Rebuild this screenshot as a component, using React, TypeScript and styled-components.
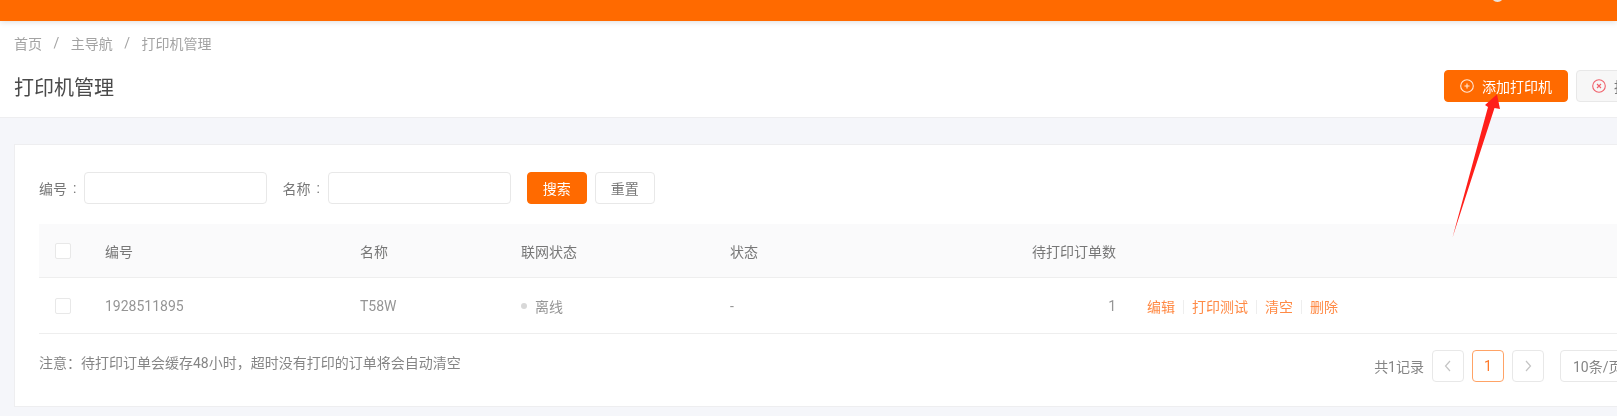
import React from "react";
import styled, { createGlobalStyle } from "styled-components";

const Global = createGlobalStyle`
  html, body { margin: 0; padding: 0; background: #f5f6fa; overflow: hidden; }
  body { font-family: "Roboto", "Noto Sans CJK SC", sans-serif; font-size: 14px; }
  * { box-sizing: border-box; }
`;

const Page = styled.div`
  position: relative;
  width: 1617px;
  height: 416px;
  overflow: hidden;
  background: #f5f6fa;
  filter: blur(0.6px);
`;

const TopBar = styled.div`
  height: 21px;
  background: #ff6a00;
  position: relative;
  z-index: 1;
  box-shadow: 0 1px 6px rgba(0, 0, 0, 0.14);
`;

const Avatar = styled.span`
  position: absolute;
  left: 1491px;
  top: -11px;
  width: 13px;
  height: 13px;
  border-radius: 50%;
  background: #e8e2dc;
`;

const Header = styled.header`
  height: 97px;
  background: #fff;
  border-bottom: 1px solid #eeeef0;
  padding: 12px 14px 0;
`;

const Crumbs = styled.nav`
  display: flex;
  height: 20px;
  align-items: center;
  font-size: 14px;
  color: #a3a3a3;
  gap: 11.5px;
`;

const TitleRow = styled.div`
  display: flex;
  align-items: center;
  margin-top: 17px;
  width: 1686px;
`;

const Title = styled.h1`
  margin: 0;
  font-size: 20px;
  font-weight: 400;
  color: #4a4a4a;
`;

const Actions = styled.div`
  display: flex;
  gap: 8px;
  margin-left: auto;
`;

const Btn = styled.button<{ $primary?: boolean }>`
  height: 32px;
  border-radius: 4px;
  padding: 0;
  font: inherit;
  font-size: 14px;
  display: inline-flex;
  align-items: center;
  justify-content: center;
  border: 1px solid ${(p) => (p.$primary ? "#ff6a00" : "#e8e8e8")};
  background: ${(p) => (p.$primary ? "#ff6a00" : "#fff")};
  color: ${(p) => (p.$primary ? "#fff" : "#777")};
`;

const IconBtn = styled(Btn)`
  width: 124px;
  justify-content: flex-start;
  padding-left: 15px;
  gap: 8px;
`;

const ClearBtn = styled(IconBtn)`
  background: #f7f7f7;
`;

const SearchBtn = styled(Btn)`
  width: 60px;
`;

const Content = styled.main`
  padding: 26px 0 0 14px;
`;

const Card = styled.section`
  width: 1700px;
  height: 263px;
  background: #fff;
  border: 1px solid #eeeef0;
  padding: 27px 24px 0 24px;
`;

const SearchRow = styled.div`
  display: flex;
  align-items: center;
  height: 32px;
`;

const Field = styled.label`
  display: flex;
  align-items: center;
  font-size: 14px;
  color: #777;
  margin-right: 15px;
`;

const Colon = styled.span`
  margin: 0 8px 0 6px;
`;

const Input = styled.div`
  width: 183px;
  height: 32px;
  border: 1px solid #e8e8e8;
  border-radius: 4px;
  background: #fff;
`;

const Buttons = styled.div`
  display: flex;
  gap: 8px;
  margin-left: 1px;
`;

const Table = styled.div`
  margin-top: 20px;
  width: 1621px;
`;

const Row = styled.div<{ $head?: boolean }>`
  display: grid;
  grid-template-columns: 66px 255px 161px 209px 200px 186px 1fr;
  align-items: center;
  height: ${(p) => (p.$head ? 54 : 56)}px;
  font-size: 14px;
  color: ${(p) => (p.$head ? "#777" : "#959595")};
  background: ${(p) => (p.$head ? "#fafafb" : "#fff")};
  border-bottom: 1px solid #eeeeee;
`;

const CheckCell = styled.div`
  padding-left: 16px;
  display: flex;
`;

const Check = styled.span`
  width: 16px;
  height: 16px;
  border: 1px solid #e8e8e8;
  border-radius: 2px;
  background: #fff;
`;

const Count = styled.div`
  text-align: right;
`;

const StatusCell = styled.div`
  display: flex;
  align-items: center;
  gap: 8px;
`;

const Dot = styled.span`
  width: 6px;
  height: 6px;
  border-radius: 50%;
  background: #d8d8d8;
`;

const Ops = styled.div`
  display: flex;
  align-items: center;
  padding-left: 31px;
  color: #ff8a45;
  font-size: 14px;
`;

const OpLink = styled.span`
  & + &::before {
    content: "";
    display: inline-block;
    width: 1px;
    height: 14px;
    background: #eeeeee;
    margin: 0 8px;
    vertical-align: -2px;
  }
`;

const Footer = styled.div`
  display: flex;
  align-items: flex-start;
  padding-top: 16px;
  width: 1621px;
`;

const Note = styled.div`
  font-size: 14px;
  line-height: 20px;
  margin-top: 3px;
  color: #858585;
`;

const Pager = styled.div`
  margin-left: auto;
  display: flex;
  align-items: center;
  gap: 8px;
  font-size: 14px;
  color: #858585;
`;

const PageBox = styled.span<{ $active?: boolean }>`
  width: 32px;
  height: 32px;
  border-radius: 4px;
  border: 1px solid ${(p) => (p.$active ? "#ffa366" : "#e8e8e8")};
  color: ${(p) => (p.$active ? "#ff7a2a" : "#c4c4c4")};
  display: inline-flex;
  align-items: center;
  justify-content: center;
`;

const PageSize = styled.span`
  width: 100px;
  height: 32px;
  margin-left: 8px;
  border-radius: 4px;
  border: 1px solid #e8e8e8;
  display: inline-flex;
  align-items: center;
  padding-left: 12px;
  white-space: nowrap;
`;

const Arrow = styled.svg`
  position: absolute;
  left: 1440px;
  top: 90px;
  z-index: 2;
`;

const PlusIcon = () => (
  <svg width="14" height="14" viewBox="0 0 14 14" fill="none" stroke="#ffe9da" strokeWidth="1.1">
    <circle cx="7" cy="7" r="6.3" />
    <path d="M7 4.5v5M4.5 7h5" />
  </svg>
);

const CloseIcon = () => (
  <svg width="14" height="14" viewBox="0 0 14 14" fill="none" stroke="#f0606a" strokeWidth="1.1">
    <circle cx="7" cy="7" r="6.3" />
    <path d="M5 5l4 4M9 5l-4 4" />
  </svg>
);

const Chevron = ({ d }: { d: string }) => (
  <svg width="8" height="12" viewBox="0 0 8 12" fill="none" stroke="#c4c4c4" strokeWidth="1.2">
    <path d={d} />
  </svg>
);

export default function App() {
  return (
    <Page>
      <Global />
      <TopBar>
        <Avatar />
      </TopBar>
      <Header>
        <Crumbs>
          <span>首页</span>
          <span>/</span>
          <span>主导航</span>
          <span>/</span>
          <span>打印机管理</span>
        </Crumbs>
        <TitleRow>
          <Title>打印机管理</Title>
          <Actions>
            <IconBtn $primary>
              <PlusIcon />
              添加打印机
            </IconBtn>
            <ClearBtn>
              <CloseIcon />
              批量删除
            </ClearBtn>
          </Actions>
        </TitleRow>
      </Header>
      <Content>
        <Card>
          <SearchRow>
            <Field>
              编号<Colon>:</Colon>
              <Input />
            </Field>
            <Field>
              名称<Colon>:</Colon>
              <Input />
            </Field>
            <Buttons>
              <SearchBtn $primary>搜索</SearchBtn>
              <SearchBtn>重置</SearchBtn>
            </Buttons>
          </SearchRow>
          <Table>
            <Row $head>
              <CheckCell>
                <Check />
              </CheckCell>
              <div>编号</div>
              <div>名称</div>
              <div>联网状态</div>
              <div>状态</div>
              <Count>待打印订单数</Count>
              <div />
            </Row>
            <Row>
              <CheckCell>
                <Check />
              </CheckCell>
              <div>1928511895</div>
              <div>T58W</div>
              <StatusCell>
                <Dot />
                离线
              </StatusCell>
              <div>-</div>
              <Count>1</Count>
              <Ops>
                <OpLink>编辑</OpLink>
                <OpLink>打印测试</OpLink>
                <OpLink>清空</OpLink>
                <OpLink>删除</OpLink>
              </Ops>
            </Row>
          </Table>
          <Footer>
            <Note>注意：待打印订单会缓存48小时，超时没有打印的订单将会自动清空</Note>
            <Pager>
              共1记录
              <PageBox>
                <Chevron d="M6 1L1.5 6 6 11" />
              </PageBox>
              <PageBox $active>1</PageBox>
              <PageBox>
                <Chevron d="M2 1l4.5 5L2 11" />
              </PageBox>
              <PageSize>10条/页</PageSize>
            </Pager>
          </Footer>
        </Card>
      </Content>
      <Arrow width="70" height="150" viewBox="0 0 70 150">
        <path d="M12.5 147.5 L48 17 L45 15 L57 4.3 L60 19 L54.5 18 Z" fill="#ff1f1a" />
      </Arrow>
    </Page>
  );
}
